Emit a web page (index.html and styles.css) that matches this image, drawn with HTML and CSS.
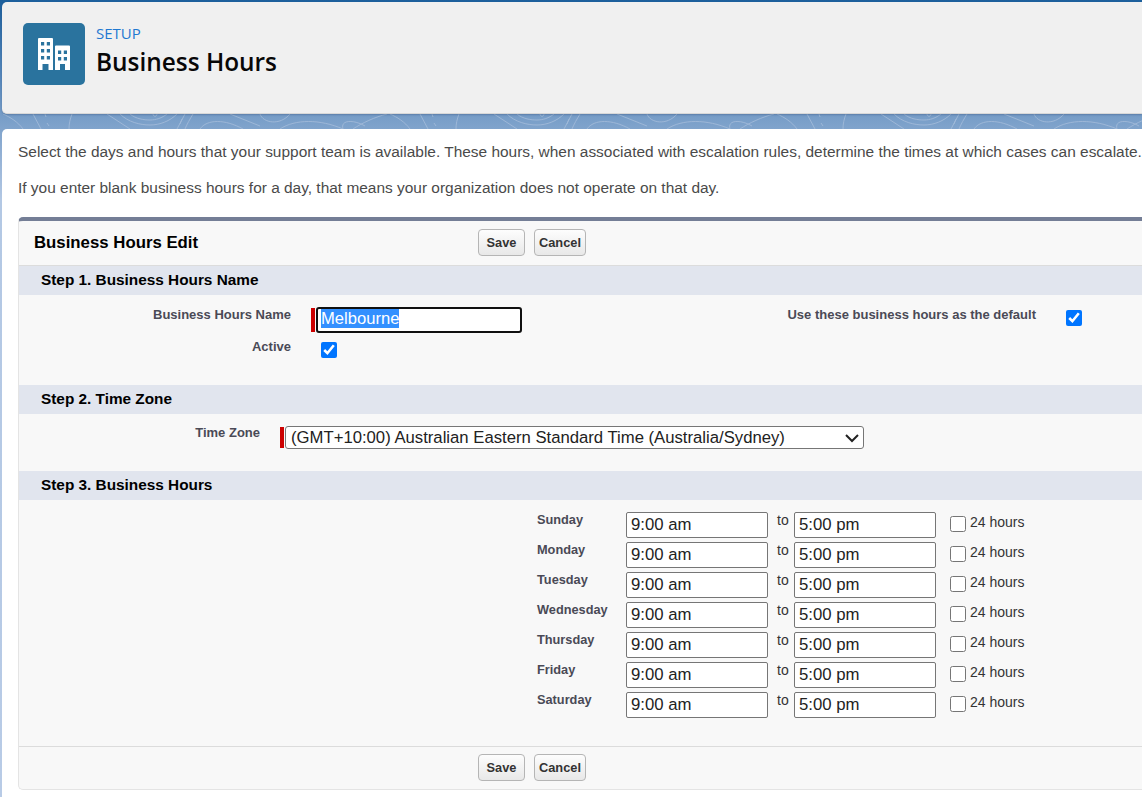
FILE: index.html
```html
<!DOCTYPE html>
<html lang="en">
<head>
    <meta charset="UTF-8">
    <meta name="viewport" content="width=device-width, initial-scale=1.0">
    <title>Business Hours</title>
    <link rel="stylesheet" href="styles.css">
</head>
<body>
    <svg class="bg-lines" width="1142" height="16">
        <defs>
            <pattern id="contours" width="387" height="16" patternUnits="userSpaceOnUse">
                <g fill="none" stroke="#a0b9d8" stroke-width="0.9">
                    <path d="M3 0C10 3 18 8 23 15M33 0L41 15M45 0L46 3M47 9L49 12M72 0C70 5 69 10 69 15"/>
                    <path d="M107 0L130 15M120 0C128 8 140 11 150 11S170 7 177 0M130 0C136 5 144 6 150 6S162 4 167 0M153 0C153 3 157 3 157 0"/>
                    <path d="M180 10L182 5M185 0L177 15M193 0C190 5 187 10 185 15M200 15C207 5 225 5 243 15M230 0L260 12"/>
                    <path d="M260 0C263 9 280 12 290 0M280 15C295 5 320 5 343 15C340 5 355 6 365 12M353 15C362 9 375 3 387 0"/>
                </g>
            </pattern>
        </defs>
        <rect width="1142" height="16" fill="url(#contours)"/>
    </svg>

    <header class="page-header">
        <div class="header-icon">
            <svg width="32" height="32" viewBox="0 0 32 32">
                <path fill="#fff" d="M0 32V1a1 1 0 0 1 1-1h13a1 1 0 0 1 1 1v31h-4.500v-6H4.500v6zM17 32V8.500a1 1 0 0 1 1-1h13a1 1 0 0 1 1 1V32h-5v-6h-5v6z"/>
                <path fill="#2a739e" d="M3 4h3.200v3.500H3zM8.800 4h3.200v3.500H8.800zM3 11h3.200v3.500H3zM8.800 11h3.200v3.500H8.800zM3 18h3.200v3.500H3zM8.800 18h3.200v3.500H8.800zM20 12.500h3.200V16H20zM25.800 12.500H29V16h-3.200zM20 19h3.200v3.500H20zM25.800 19H29v3.500h-3.200z"/>
            </svg>
        </div>
        <div class="header-text">
            <div class="header-kicker">SETUP</div>
            <h1 class="header-title">Business Hours</h1>
        </div>
    </header>

    <main class="content">
        <p class="intro">Select the days and hours that your support team is available. These hours, when associated with escalation rules, determine the times at which cases can escalate.</p>
        <p class="intro">If you enter blank business hours for a day, that means your organization does not operate on that day.</p>

        <form class="edit-block">
            <div class="block-top">
                <h2 class="block-title">Business Hours Edit</h2>
                <div class="block-buttons">
                    <button type="button" class="btn">Save</button>
                    <button type="button" class="btn">Cancel</button>
                </div>
            </div>

            <h3 class="step-title">Step 1. Business Hours Name</h3>
            <div class="step-one">
                <span class="field-label">Business Hours Name</span>
                <span class="required-bar name-bar"></span>
                <div class="name-input"><span class="selected-text">Melbourne</span></div>
                <span class="field-label default-label">Use these business hours as the default</span>
                <input type="checkbox" class="check default-check" checked>
                <span class="field-label active-label">Active</span>
                <input type="checkbox" class="check active-check" checked>
            </div>

            <h3 class="step-title">Step 2. Time Zone</h3>
            <div class="step-two">
                <span class="field-label">Time Zone</span>
                <span class="required-bar zone-bar"></span>
                <select class="zone-select">
                    <option>(GMT+10:00) Australian Eastern Standard Time (Australia/Sydney)</option>
                </select>
            </div>

            <h3 class="step-title">Step 3. Business Hours</h3>
            <div class="step-three">
                <div class="day-row">
                    <span class="day-name">Sunday</span>
                    <input class="time-input" value="9:00 am">
                    <span class="to-word">to</span>
                    <input class="time-input" value="5:00 pm">
                    <input type="checkbox" class="check all-day">
                    <span class="all-day-label">24 hours</span>
                </div>
                <div class="day-row">
                    <span class="day-name">Monday</span>
                    <input class="time-input" value="9:00 am">
                    <span class="to-word">to</span>
                    <input class="time-input" value="5:00 pm">
                    <input type="checkbox" class="check all-day">
                    <span class="all-day-label">24 hours</span>
                </div>
                <div class="day-row">
                    <span class="day-name">Tuesday</span>
                    <input class="time-input" value="9:00 am">
                    <span class="to-word">to</span>
                    <input class="time-input" value="5:00 pm">
                    <input type="checkbox" class="check all-day">
                    <span class="all-day-label">24 hours</span>
                </div>
                <div class="day-row">
                    <span class="day-name">Wednesday</span>
                    <input class="time-input" value="9:00 am">
                    <span class="to-word">to</span>
                    <input class="time-input" value="5:00 pm">
                    <input type="checkbox" class="check all-day">
                    <span class="all-day-label">24 hours</span>
                </div>
                <div class="day-row">
                    <span class="day-name">Thursday</span>
                    <input class="time-input" value="9:00 am">
                    <span class="to-word">to</span>
                    <input class="time-input" value="5:00 pm">
                    <input type="checkbox" class="check all-day">
                    <span class="all-day-label">24 hours</span>
                </div>
                <div class="day-row">
                    <span class="day-name">Friday</span>
                    <input class="time-input" value="9:00 am">
                    <span class="to-word">to</span>
                    <input class="time-input" value="5:00 pm">
                    <input type="checkbox" class="check all-day">
                    <span class="all-day-label">24 hours</span>
                </div>
                <div class="day-row">
                    <span class="day-name">Saturday</span>
                    <input class="time-input" value="9:00 am">
                    <span class="to-word">to</span>
                    <input class="time-input" value="5:00 pm">
                    <input type="checkbox" class="check all-day">
                    <span class="all-day-label">24 hours</span>
                </div>
            </div>

            <div class="block-bottom">
                <div class="block-buttons">
                    <button type="button" class="btn">Save</button>
                    <button type="button" class="btn">Cancel</button>
                </div>
            </div>
        </form>
    </main>
</body>
</html>
```

FILE: styles.css
```css
* {
    box-sizing: border-box;
}

html, body {
    height: 797px;
    overflow: hidden;
}

body {
    margin: 0;
    padding: 2px 0 0 2px;
    position: relative;
    font-family: "Liberation Sans", Arial, sans-serif;
    background: linear-gradient(180deg, #1c5f9c 0, #4a7fb5 60px, #7a9fc9 120px, #b3c8e4 200px, #b8cbe6 100%);
}

.bg-lines {
    position: absolute;
    left: 0;
    top: 114px;
}

/* Page header */
.page-header {
    position: relative;
    display: flex;
    align-items: center;
    gap: 11px;
    height: 112px;
    margin-bottom: 15px;
    padding: 0 0 8px 21px;
    background-color: #f0f0f0;
    border-radius: 5px 0 0 5px;
    border-bottom: 1px solid #d8d8d8;
    box-shadow: 0 1px 2px rgba(40, 70, 110, 0.35);
}

.header-icon {
    display: flex;
    align-items: center;
    justify-content: center;
    width: 62px;
    height: 62px;
    background-color: #2a739e;
    border-radius: 5px;
}

.header-text {
    margin-bottom: 6px;
}

.header-kicker {
    margin-bottom: 2px;
    font-family: "Open Sans", sans-serif;
    font-size: 15px;
    line-height: 19px;
    color: #1f78d1;
}

.header-title {
    margin: 0;
    font-family: "Open Sans", sans-serif;
    font-size: 24.4px;
    font-weight: 600;
    line-height: 33px;
    color: #080707;
}

/* Main content */
.content {
    position: relative;
    height: 668px;
    padding: 13px 0 0 16px;
    background-color: #fff;
    border-radius: 5px 0 0 0;
}

.intro {
    margin: 0 0 17px;
    font-size: 15.45px;
    line-height: 19px;
    color: #4a4a4a;
    white-space: nowrap;
}

/* Edit block */
.edit-block {
    margin-top: 20px;
    background-color: #f8f8f8;
    border-top: 4px solid #747e96;
    border-left: 1px solid #e4e4e4;
    border-bottom: 1px solid #e4e4e4;
    border-radius: 5px 0 0 5px;
}

.block-top {
    display: flex;
    align-items: center;
    height: 45px;
    padding-left: 15px;
    border-bottom: 1px solid #dcdcdc;
}

.block-top .block-buttons {
    margin-bottom: 2px;
}

.block-title {
    width: 444px;
    margin: 0;
    font-size: 16.8px;
    font-weight: bold;
    color: #000;
}

.block-buttons {
    display: flex;
    gap: 9px;
}

.btn {
    height: 27px;
    padding: 0 4px;
    min-width: 47px;
    font-family: "Liberation Sans", Arial, sans-serif;
    font-size: 12.8px;
    font-weight: bold;
    color: #333;
    background: linear-gradient(180deg, #fdfdfd, #e8e8e8);
    border: 1px solid #b5b5b5;
    border-radius: 4px;
}

.step-title {
    height: 29px;
    margin: 0;
    padding-left: 22px;
    font-size: 15.35px;
    font-weight: bold;
    line-height: 27px;
    color: #000;
    background-color: #e1e5ee;
}

.field-label {
    font-size: 13px;
    font-weight: bold;
    color: #4a4a56;
    text-align: right;
}

.required-bar {
    background-color: #c00;
}

.check {
    width: 16px;
    height: 16px;
    margin: 0;
}

/* Step 1 */
.step-one {
    display: grid;
    grid-template-columns: 272px 20px 4px 207px 514px 30px 16px 1fr;
    grid-template-rows: 32px 58px;
    height: 90px;
    padding-top: 13px;
}

.step-one .field-label {
    line-height: 14px;
}

.name-bar {
    grid-column: 3;
    height: 24px;
}

.name-input {
    grid-column: 4;
    height: 26px;
    margin: -1px 0 0 1px;
    padding: 0 0 0 3px;
    font-size: 16.6px;
    line-height: 19px;
    color: #fff;
    background-color: #fff;
    border: 2px solid #101010;
    border-radius: 3px;
}

.selected-text {
    display: inline-block;
    background-color: #3390ff;
}

.default-label {
    grid-column: 5;
}

.default-check {
    grid-column: 7;
    margin-top: 2px;
}

.active-label {
    grid-column: 1;
}

.active-check {
    grid-column: 4;
    margin: 2px 0 0 6px;
}

/* Step 2 */
.step-two {
    display: flex;
    align-items: flex-start;
    height: 57px;
    padding-top: 12px;
}

.step-two .field-label {
    width: 241px;
    line-height: 14px;
}

.zone-bar {
    width: 4px;
    height: 21px;
    margin: 1px 1px 0 20px;
}

.zone-select {
    appearance: none;
    width: 579px;
    height: 23px;
    padding: 0 0 0 5px;
    font-family: "Liberation Sans", Arial, sans-serif;
    font-size: 16.7px;
    color: #222;
    background: #fff url("data:image/svg+xml,%3Csvg xmlns='http://www.w3.org/2000/svg' width='16' height='10'%3E%3Cpath d='M2 2l6 6 6-6' fill='none' stroke='%23222' stroke-width='2'/%3E%3C/svg%3E") no-repeat right 3px center;
    border: 1px solid #767676;
    border-radius: 3px;
}

/* Step 3 */
.step-three {
    height: 246px;
    padding: 12px 0 0 518px;
}

.day-row {
    display: flex;
    align-items: flex-start;
    height: 30px;
}

.day-name {
    width: 89px;
    margin-top: 1px;
    font-size: 12.75px;
    font-weight: bold;
    line-height: 14px;
    color: #4a4a56;
}

.time-input {
    width: 142px;
    height: 26px;
    padding: 1px 4px;
    font-family: "Liberation Sans", Arial, sans-serif;
    font-size: 16.75px;
    color: #222;
    background-color: #fff;
    border: 1px solid #767676;
    border-radius: 2px;
}

.to-word {
    width: 26px;
    padding-left: 9px;
    font-size: 14px;
    line-height: 16px;
    color: #333;
}

.all-day {
    margin: 4px 4px 0 14px;
}

.all-day-label {
    font-size: 14px;
    line-height: 20px;
    color: #333;
}

.block-bottom {
    height: 43px;
    padding: 7px 0 0 459px;
    border-top: 1px solid #dcdcdc;
}
```
